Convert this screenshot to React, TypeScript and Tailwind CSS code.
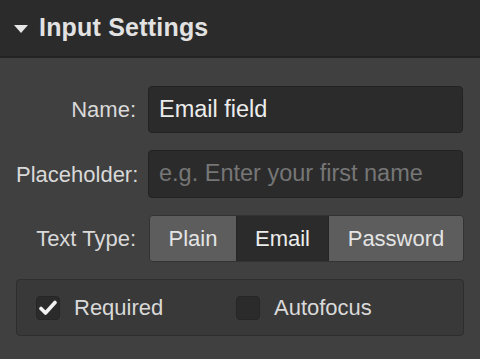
export default function App() {
  return (
    <div className="w-[480px] h-[359px] bg-[#404040] font-['Liberation_Sans',Arial,sans-serif] text-[#d9d9d9] overflow-hidden">
      {/* Header */}
      <div className="h-[58px] bg-[#2b2b2b] border-b-2 border-[#232323] flex items-center pl-[14px] gap-[11px]">
        <svg width="14" height="8" viewBox="0 0 14 8" className="mt-[1px]">
          <polygon points="0,0 14,0 7,8" fill="#e6e6e6" />
        </svg>
        <span className="text-[25px] font-bold text-[#e2e2e2] tracking-[0.2px]">Input Settings</span>
      </div>

      {/* Body */}
      <div className="pt-[28px] pl-4 pr-[17px] flex flex-col gap-[17px]">
        <div className="flex items-center gap-3">
          <label className="w-[120px] text-right text-[22px] whitespace-nowrap">Name:</label>
          <div className="flex-1 h-[47px] bg-[#2b2b2b] border border-[#222] rounded-[4px] flex items-center pl-[10px] text-[23.5px] text-[#ececec]">
            Email field
          </div>
        </div>

        <div className="flex items-center gap-3">
          <label className="w-[120px] text-right text-[22px] whitespace-nowrap">Placeholder:</label>
          <div className="flex-1 h-[48px] bg-[#2b2b2b] border border-[#222] rounded-[4px] flex items-center pl-[10px] text-[23.5px] text-[#767676] whitespace-nowrap">
            e.g. Enter your first name
          </div>
        </div>

        <div className="flex items-center gap-3">
          <label className="w-[120px] text-right text-[22px] whitespace-nowrap">Text Type:</label>
          <div className="flex-1 h-[47px] border border-[#333] rounded-[4px] flex overflow-hidden text-[22px] mr-[-1px] ml-[1px]">
            <div className="w-[86px] bg-[#5d5d5d] flex items-center justify-center text-[#e4e4e4]">Plain</div>
            <div className="w-[93px] bg-[#2b2b2b] border-x border-[#262626] flex items-center justify-center text-[#ececec]">Email</div>
            <div className="flex-1 bg-[#5d5d5d] flex items-center justify-center text-[#e4e4e4]">Password</div>
          </div>
        </div>

        <div className="h-[57px] mr-[-1px] bg-[#393939] border border-[#2e2e2e] rounded-[4px] flex items-center pl-[19px] text-[22px]">
          <div className="w-[200px] flex items-center gap-[14px]">
            <div className="w-[24px] h-[24px] bg-[#2b2b2b] border border-[#262626] rounded-[4px] flex items-center justify-center">
              <svg width="18" height="16" viewBox="0 0 18 16">
                <path d="M2 8.5 L6.5 13 L16 2.5" fill="none" stroke="#f2f2f2" strokeWidth="3.6" strokeLinecap="round" strokeLinejoin="round" />
              </svg>
            </div>
            <span>Required</span>
          </div>
          <div className="flex items-center gap-[14px]">
            <div className="w-[24px] h-[24px] bg-[#2b2b2b] border border-[#262626] rounded-[4px]" />
            <span>Autofocus</span>
          </div>
        </div>
      </div>
    </div>
  )
}
